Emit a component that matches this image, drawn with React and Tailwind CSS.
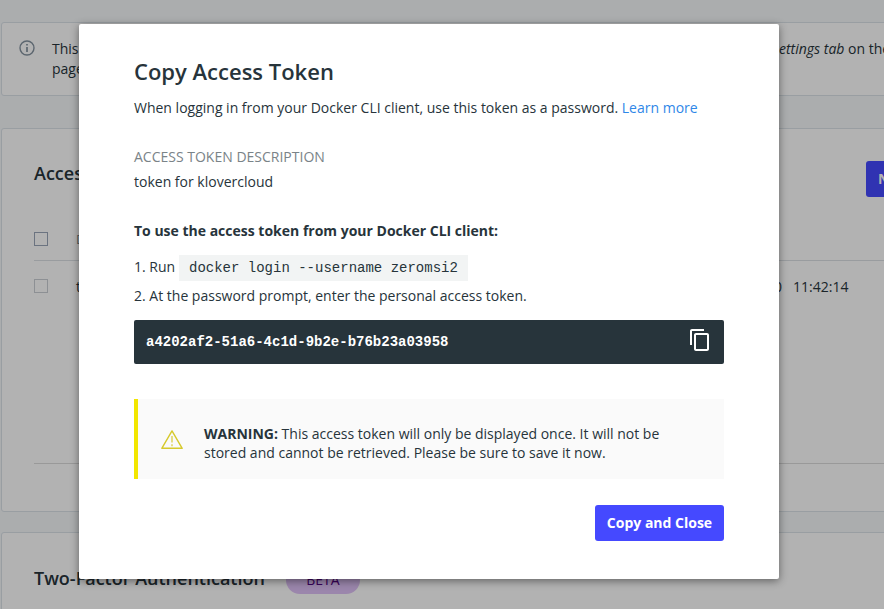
import { MdContentCopy } from "react-icons/md";

function InfoIcon() {
  return (
    <svg className="mt-[17px] ml-[17px] h-4 w-4 shrink-0" viewBox="0 0 16 16" fill="none">
      <circle cx="8" cy="8" r="7" stroke="#8593a0" strokeWidth="1.4" />
      <path d="M8 4v1.6M8 7v5" stroke="#8593a0" strokeWidth="1.7" />
    </svg>
  );
}

function WarningIcon() {
  return (
    <svg className="h-5 w-[22px] shrink-0" viewBox="0 0 22 20" fill="none">
      <path d="M11 0.9L21.2 18.3H0.8Z" stroke="#d6c92c" strokeWidth="1.4" strokeLinejoin="round" />
      <path d="M11 6v6.5M11 14.2v2" stroke="#e0d665" strokeWidth="1.6" />
    </svg>
  );
}

function Page() {
  return (
    <div className="flex h-[609px] w-[1000px] flex-col pt-[22px] pl-px text-[14px] leading-5">
      <section className="flex h-[74px] shrink-0 rounded-[3px] border border-[#dbe2e9] bg-white">
        <InfoIcon />
        <div className="mt-4 ml-[17px]">
          <div className="flex">
            <span className="w-[721px] shrink-0">This</span>
            <span className="whitespace-nowrap">
              <em>settings tab</em> on the
            </span>
          </div>
          <div>page</div>
        </div>
      </section>

      <section className="mt-8 h-[384px] shrink-0 rounded-[3px] border border-[#dbe2e9] bg-white pl-8">
        <div className="flex h-[110px] items-start justify-between pt-8">
          <h2 className="mt-[-1px] text-[18px] leading-[26px] font-semibold">Access Tokens</h2>
          <button className="mr-[30px] h-9 w-[103px] rounded-[3px] bg-[#4549ff] pl-3 text-left font-bold text-white">
            New
          </button>
        </div>
        <div className="mt-[-17px] flex h-[39px] items-start border-b border-[#dbe0e4] pt-[7px]">
          <span className="mt-[3px] h-3.5 w-3.5 border border-[#9aa5b8]" />
          <span className="ml-7 text-[13px] text-[#7a8388]">DESCRIPTION</span>
        </div>
        <div className="flex h-[203px] items-start border-b border-[#dbdbdb] pt-4">
          <span className="mt-[2px] h-3.5 w-3.5 border border-[#cbced4]" />
          <span className="ml-7 w-[629px] shrink-0">token</span>
          <span className="w-[77px] text-right whitespace-pre">2020</span>
          <span className="ml-[11px]">11:42:14</span>
        </div>
      </section>

      <section className="mt-5 flex h-[150px] shrink-0 items-start rounded-[3px] border border-[#dbe2e9] bg-white pt-8 pl-8">
        <h2 className="text-[18px] leading-[26px] font-semibold">Two-Factor Authentication</h2>
        <span className="mt-px ml-[21px] h-7 w-[74px] rounded-full bg-[#dfc1f6] text-center leading-7 text-[#520082]">
          BETA
        </span>
      </section>
    </div>
  );
}

function TokenDialog() {
  return (
    <div
      role="dialog"
      className="absolute top-6 left-[79px] flex h-[555px] w-[700px] flex-col rounded-[2px] bg-white px-[55px] pt-[33px] text-[14px] leading-5 shadow-[0_2px_8px_rgba(0,0,0,0.45)]"
    >
      <h1 className="text-[22px] leading-7 font-semibold">Copy Access Token</h1>
      <p className="mt-[13px]">
        When logging in from your Docker CLI client, use this token as a password.{" "}
        <a className="text-[#2f87e8]">Learn more</a>
      </p>
      <p className="mt-[29px] text-[#7a8388]">ACCESS TOKEN DESCRIPTION</p>
      <p className="mt-[5px]">token for klovercloud</p>
      <p className="mt-[29px] font-bold">To use the access token from your Docker CLI client:</p>
      <div className="mt-3.5 flex h-[26px] items-center">
        <span className="mb-0.5 w-[45px]">1. Run</span>
        <code className="h-[26px] w-[289px] bg-[#f2f4f4] pl-2.5 font-['Liberation_Mono',monospace] text-[14px] leading-[26px]">
          docker login --username zeromsi2
        </code>
      </div>
      <p className="mt-[5px]">2. At the password prompt, enter the personal access token.</p>
      <div className="mt-3.5 flex h-11 shrink-0 items-center justify-between rounded-[2px] bg-[#27343b] px-3 text-white">
        <span className="font-['Liberation_Mono',monospace] font-bold">a4202af2-51a6-4c1d-9b2e-b76b23a03958</span>
        <MdContentCopy className="mb-1 h-6 w-6" />
      </div>
      <div className="mt-[35px] flex h-20 shrink-0 items-start border-l-4 border-[#f2e600] bg-[#fafafa] pl-[23px]">
        <div className="mt-[31px]">
          <WarningIcon />
        </div>
        <p className="mt-[25px] ml-[21px] w-[480px] leading-[19px]">
          <b>WARNING:</b> This access token will only be displayed once. It will not be
          <br />
          stored and cannot be retrieved. Please be sure to save it now.
        </p>
      </div>
      <button className="mt-[26px] h-9 w-[129px] self-end rounded-[3px] bg-[#4549ff] font-bold text-white">
        Copy and Close
      </button>
    </div>
  );
}

export default function App() {
  return (
    <div className="relative h-[609px] w-[884px] overflow-hidden bg-[#f5f8fa] font-['Open_Sans',sans-serif] text-[#27343b]">
      <Page />
      <div className="absolute inset-0 bg-black/30" />
      <TokenDialog />
    </div>
  );
}
